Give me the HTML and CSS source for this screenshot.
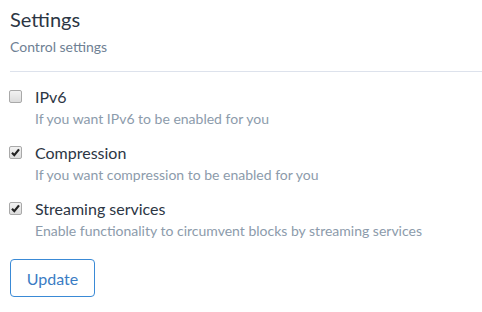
FILE: index.html
```html
<!DOCTYPE html>
<html lang="en">
<head>
    <meta charset="UTF-8">
    <meta name="viewport" content="width=device-width, initial-scale=1.0">
    <title>Settings</title>
    <link rel="stylesheet" href="styles.css">
</head>
<body>
    <div class="panel">
        <h1>Settings</h1>
        <p class="subtitle">Control settings</p>
        <hr class="divider">
        <div class="option">
            <span class="box"></span>
            <div class="option-text">
                <div class="option-label">IPv6</div>
                <div class="option-desc">If you want IPv6 to be enabled for you</div>
            </div>
        </div>
        <div class="option">
            <span class="box"><svg viewBox="0 0 13 13" width="13" height="13"><path d="M3 6.8 L5.3 9.2 L10 3.4" fill="none" stroke="#222" stroke-width="2.2"/></svg></span>
            <div class="option-text">
                <div class="option-label">Compression</div>
                <div class="option-desc">If you want compression to be enabled for you</div>
            </div>
        </div>
        <div class="option">
            <span class="box"><svg viewBox="0 0 13 13" width="13" height="13"><path d="M3 6.8 L5.3 9.2 L10 3.4" fill="none" stroke="#222" stroke-width="2.2"/></svg></span>
            <div class="option-text">
                <div class="option-label">Streaming services</div>
                <div class="option-desc">Enable functionality to circumvent blocks by streaming services</div>
            </div>
        </div>
        <button class="update">Update</button>
    </div>
</body>
</html>
```

FILE: styles.css
```css
body {
    margin: 0;
    font-family: Lato, "Open Sans", sans-serif;
    background: #fff;
}
.panel {
    padding: 7px 0 0 10px;
}
h1 {
    margin: 0;
    font-size: 20px;
    font-weight: 400;
    color: #2c3644;
    line-height: 24px;
}
.subtitle {
    margin: 7px 0 0;
    font-size: 14px;
    color: #6f8194;
    line-height: 17px;
}
.divider {
    border: none;
    border-top: 1px solid #dde2ec;
    margin: 16px 0 0;
}
.option {
    display: flex;
    margin-top: 15px;
}
.option + .option {
    margin-top: 16px;
}
.box {
    width: 11px;
    height: 11px;
    border: 1px solid #a9a9a9;
    border-radius: 2px;
    background: linear-gradient(#f2f2f2, #dcdcdc);
    margin: 3px 13px 0 -1px;
    flex: none;
    position: relative;
}
.box svg {
    position: absolute;
    left: -1px;
    top: -1px;
}
.option-label {
    font-size: 16px;
    color: #2c3644;
    line-height: 19px;
}
.option-desc {
    font-size: 14px;
    color: #8c9bab;
    line-height: 17px;
    margin-top: 4px;
}
.update {
    margin-top: 20px;
    width: 85px;
    height: 38px;
    font-family: Lato, sans-serif;
    font-size: 16px;
    color: #3a7cc4;
    background: #fff;
    border: 1px solid #3a8ad6;
    border-radius: 4px;
}
```
